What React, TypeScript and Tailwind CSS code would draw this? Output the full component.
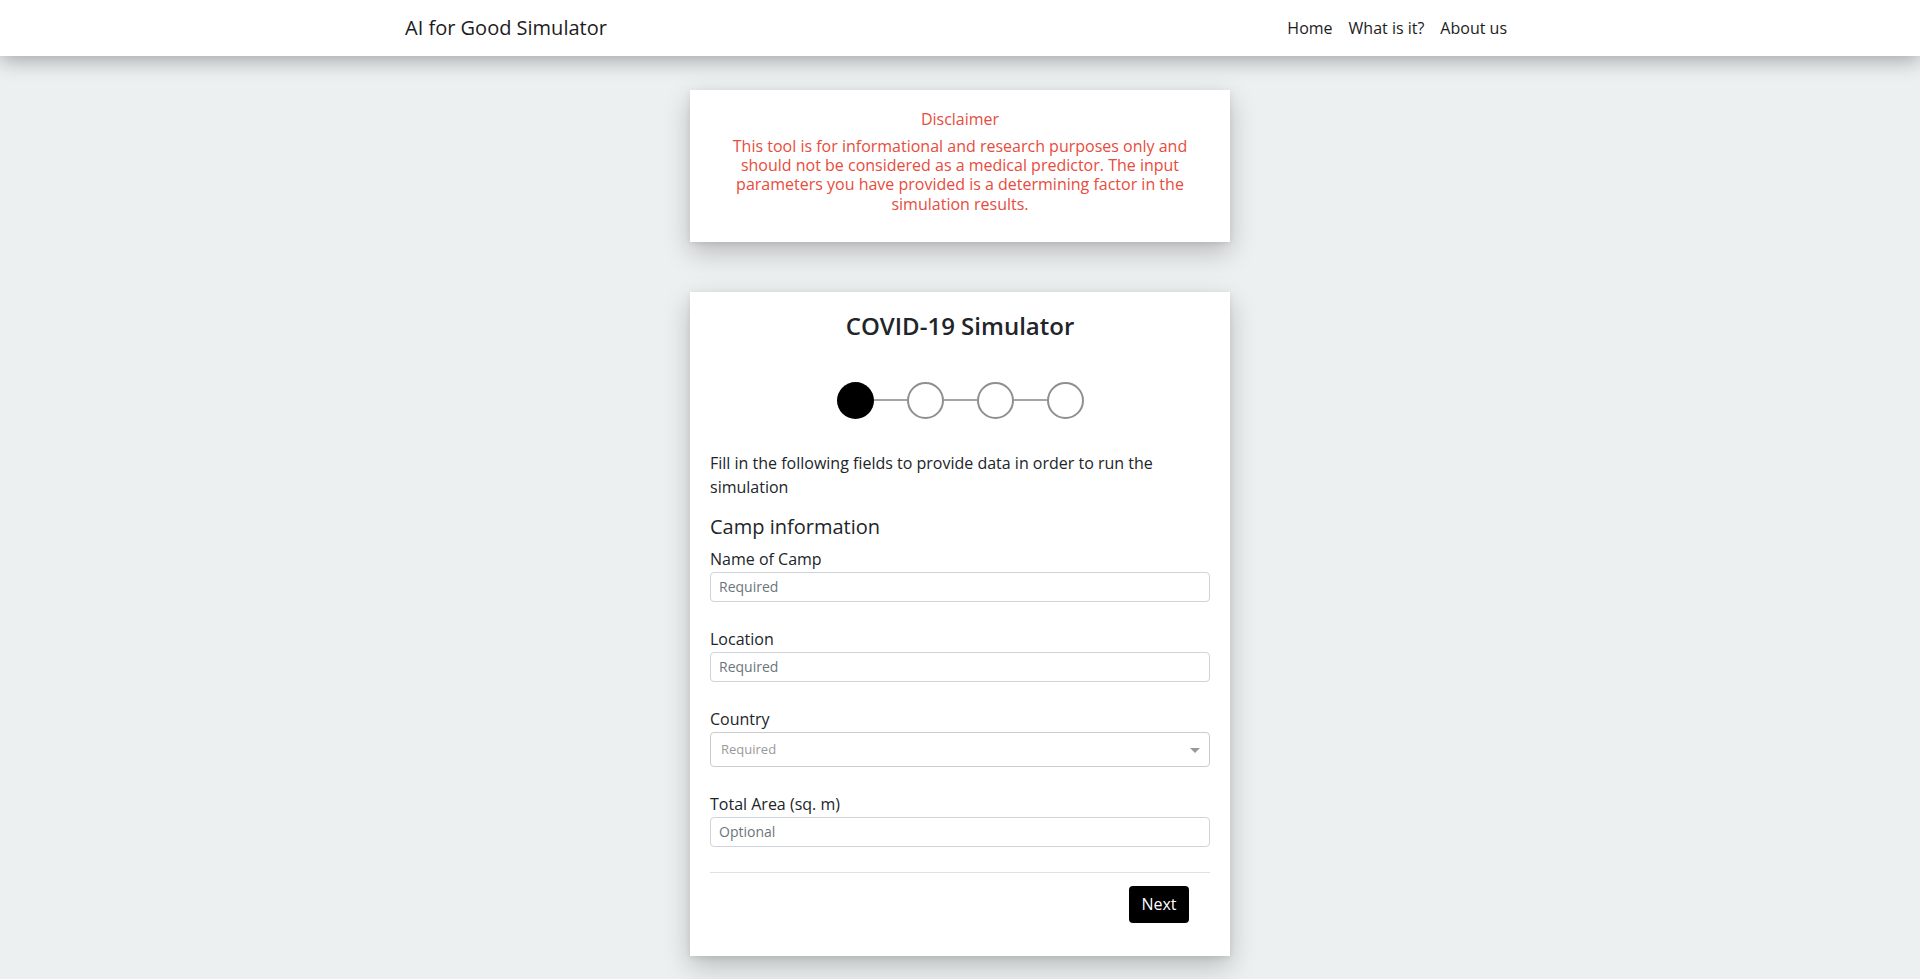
import React from 'react';

const Field = ({ label, placeholder, first }: { label: string; placeholder: string; first?: boolean }) => {
  return (
    <div className={first ? 'mt-[8px]' : 'mt-[25px]'}>
      <label className="block text-[16px] leading-[24px] text-[#212529]">{label}</label>
      <input
        type="text"
        placeholder={placeholder}
        className="mt-[1px] block h-[30px] w-full rounded-[4px] border border-[#ced4da] bg-white px-[8px] text-[14px] text-[#495057] outline-none placeholder:text-[#6c757d]"
      />
    </div>
  );
};

const Stepper = () => {
  return (
    <div className="mt-[42px] flex items-center justify-center">
      <div className="h-[37px] w-[37px] rounded-full bg-black" />
      <div className="h-[2px] w-[33px] bg-[#a5a5a5]" />
      <div className="h-[37px] w-[37px] rounded-full border-2 border-[#8f8f8f] bg-white" />
      <div className="h-[2px] w-[33px] bg-[#a5a5a5]" />
      <div className="h-[37px] w-[37px] rounded-full border-2 border-[#8f8f8f] bg-white" />
      <div className="h-[2px] w-[33px] bg-[#a5a5a5]" />
      <div className="h-[37px] w-[37px] rounded-full border-2 border-[#8f8f8f] bg-white" />
    </div>
  );
};

export default function App() {
  return (
    <div className="min-h-screen bg-[#ecf0f1] pb-[40px] font-['Open_Sans',sans-serif] text-[#212529]">
      <header className="relative z-10 h-[56px] bg-white shadow-[0_5px_20px_rgba(0,0,0,0.3)]">
        <div className="mx-auto flex h-full w-[1140px] items-center justify-between px-[15px]">
          <span className="text-[20px] leading-[30px] text-[#1c1c1c]">AI for Good Simulator</span>
          <nav className="flex text-[16px] text-[#1c1c1c]">
            <a className="px-[8px]">Home</a>
            <a className="px-[8px]">What is it?</a>
            <a className="px-[8px]">About us</a>
          </nav>
        </div>
      </header>

      <main className="flex flex-col items-center">
        <section className="mt-[34px] w-[540px] bg-white px-[40px] pb-[28px] pt-[17px] text-center text-[#e74c3c] shadow-[0_10px_25px_rgba(0,0,0,0.22),0_2px_6px_rgba(0,0,0,0.08)]">
          <h2 className="text-[16px] leading-[24px]">Disclaimer</h2>
          <p className="mt-[6px] text-[16px] leading-[19.2px]">
            This tool is for informational and research purposes only and should not be considered as a medical
            predictor. The input parameters you have provided is a determining factor in the simulation results.
          </p>
        </section>

        <section className="mt-[50px] w-[540px] bg-white px-[20px] pb-[33px] pt-[19px] shadow-[0_10px_25px_rgba(0,0,0,0.22),0_2px_6px_rgba(0,0,0,0.08)]">
          <h1 className="text-center text-[24px] font-semibold leading-[29px] text-[#212529]">COVID-19 Simulator</h1>

          <Stepper />

          <p className="mt-[32px] text-[16px] leading-[24px]">
            Fill in the following fields to provide data in order to run the simulation
          </p>

          <h3 className="mt-[16px] text-[20px] leading-[24px]">Camp information</h3>

          <Field label="Name of Camp" placeholder="Required" first />
          <Field label="Location" placeholder="Required" />

          <div className="mt-[25px]">
            <label className="block text-[16px] leading-[24px]">Country</label>
            <div className="relative mt-[1px] flex h-[35px] w-full items-center rounded-[4px] border border-[#ccc] bg-white pl-[10px]">
              <span className="text-[13px] text-[#999]">Required</span>
              <span className="absolute right-[9px] top-[15px] h-0 w-0 border-x-[5px] border-t-[5px] border-x-transparent border-t-[#999]" />
            </div>
          </div>

          <Field label="Total Area (sq. m)" placeholder="Optional" />

          <div className="mt-[25px] border-t border-[#dee2e6]" />

          <div className="mt-[13px] flex justify-end pr-[21px]">
            <button className="h-[37px] w-[60px] rounded-[4px] bg-black text-[16px] text-white">Next</button>
          </div>
        </section>
      </main>
    </div>
  );
}
